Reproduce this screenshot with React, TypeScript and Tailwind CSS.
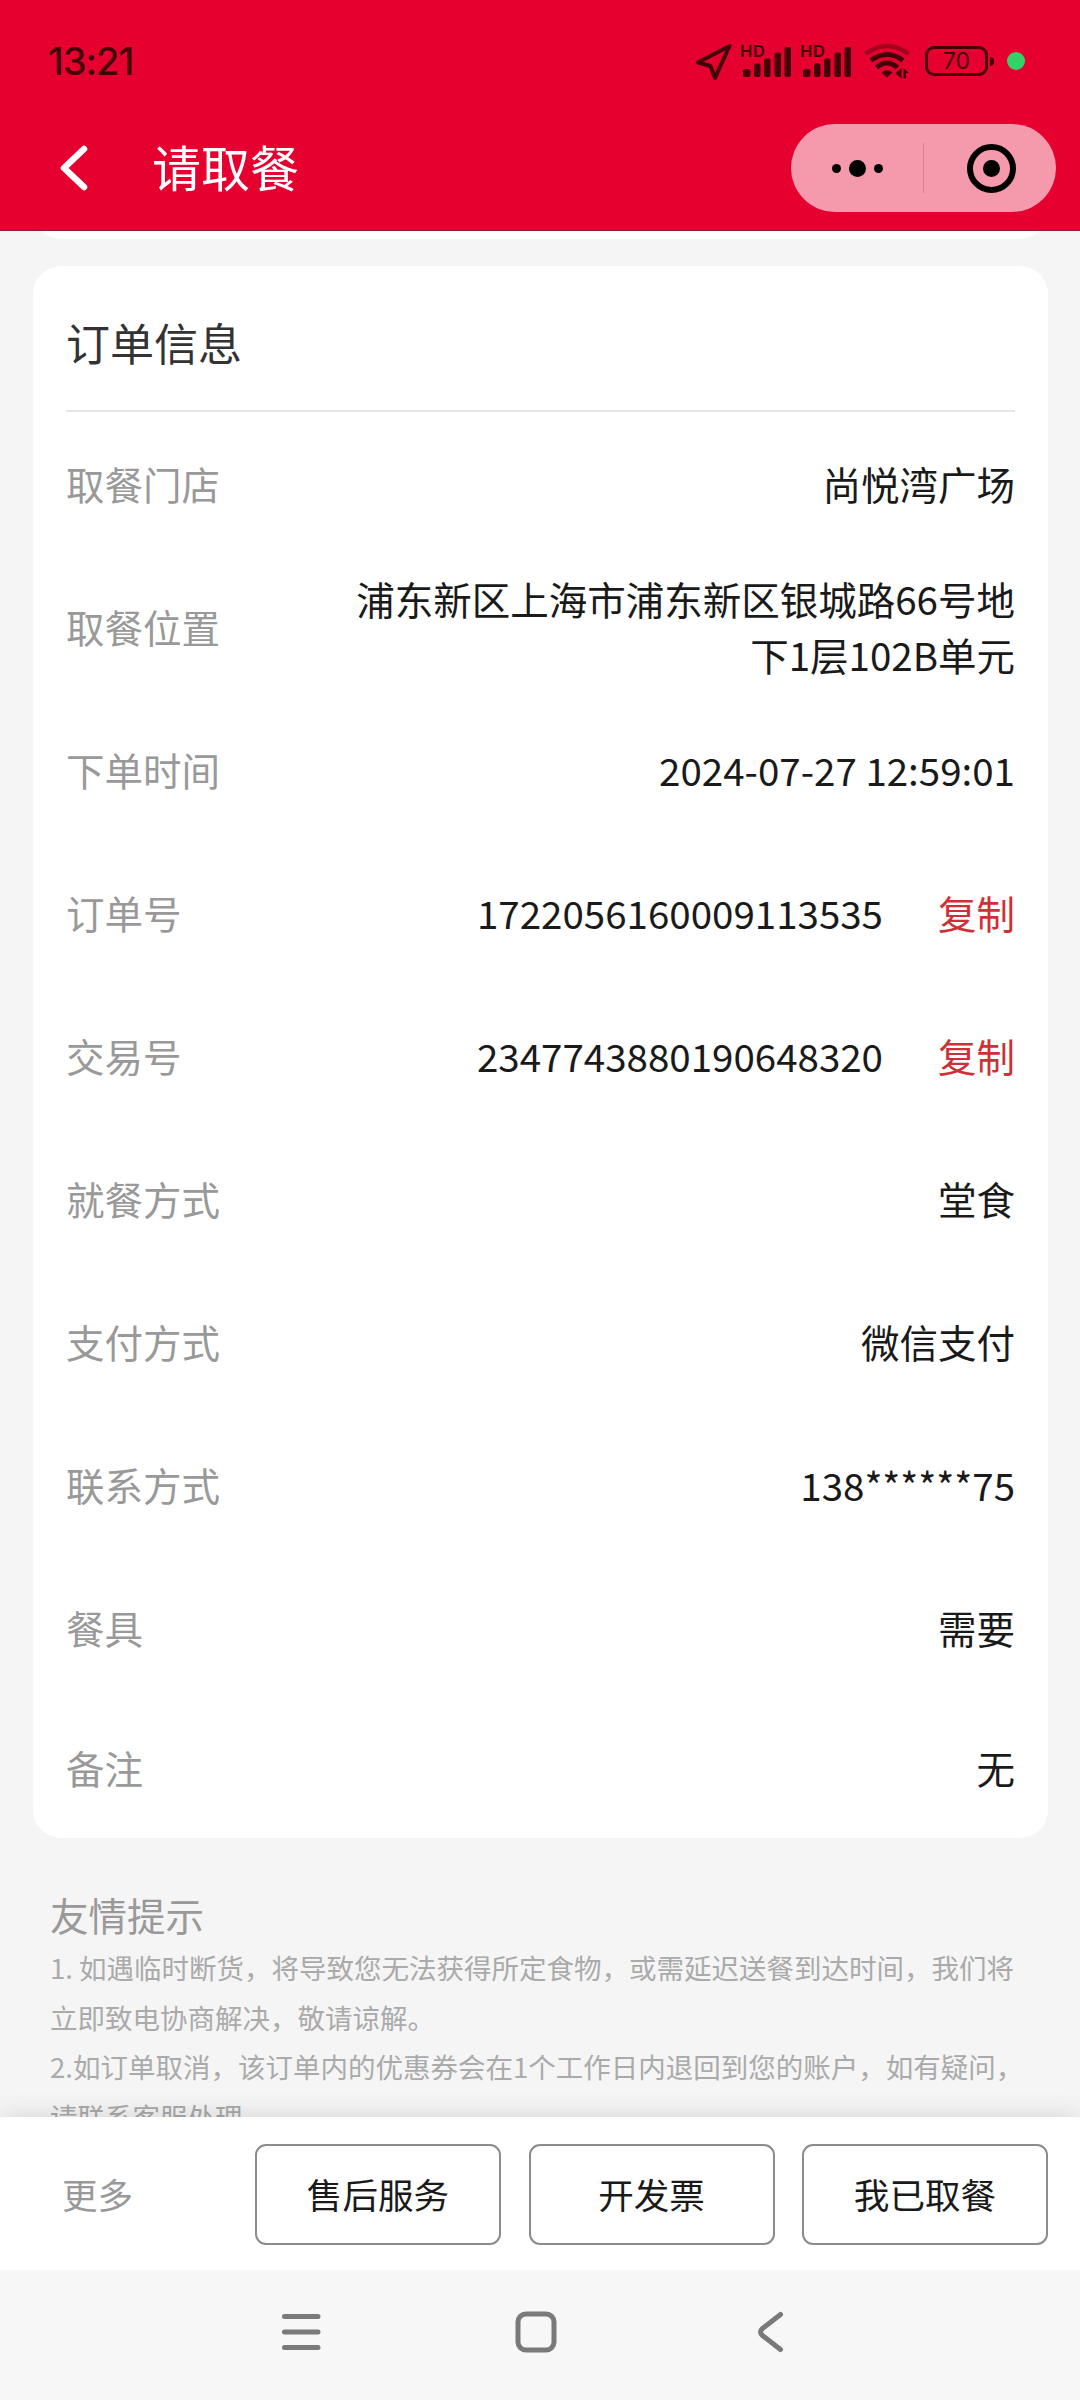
import { clsx } from "clsx";

type OrderField = {
  label: string;
  value: string;
  copyable?: boolean;
};

const orderFields: OrderField[] = [
  { label: "取餐门店", value: "尚悦湾广场" },
  { label: "取餐位置", value: "浦东新区上海市浦东新区银城路66号地下1层102B单元" },
  { label: "下单时间", value: "2024-07-27 12:59:01" },
  { label: "订单号", value: "1722056160009113535", copyable: true },
  { label: "交易号", value: "2347743880190648320", copyable: true },
  { label: "就餐方式", value: "堂食" },
  { label: "支付方式", value: "微信支付" },
  { label: "联系方式", value: "138******75" },
  { label: "餐具", value: "需要" },
  { label: "备注", value: "无" },
];

const tips = [
  "1. 如遇临时断货，将导致您无法获得所定食物，或需延迟送餐到达时间，我们将立即致电协商解决，敬请谅解。",
  "2.如订单取消，该订单内的优惠券会在1个工作日内退回到您的账户，如有疑问，请联系客服处理",
];

const actions = ["售后服务", "开发票", "我已取餐"];

function SignalIcon() {
  return (
    <svg width="52" height="44" viewBox="0 -4 52 44" fill="currentColor">
      <text x="-1" y="14" fontSize="16.5" fontWeight="600" fontFamily="Inter, sans-serif" textLength="25">
        HD
      </text>
      <rect x="2" y="26" width="7.5" height="8" rx="2.5" />
      <rect x="13" y="20.5" width="6.5" height="13.5" rx="2" />
      <rect x="23" y="15.5" width="6.5" height="18.5" rx="2" />
      <rect x="33.5" y="9.5" width="6.5" height="24.5" rx="2" />
      <rect x="43.5" y="4" width="6.5" height="30" rx="2" />
    </svg>
  );
}

function WifiIcon() {
  return (
    <svg width="46" height="36" viewBox="0 0 46 36" fill="none" stroke="currentColor" strokeWidth="5">
      <path d="M1.5 11Q23 -5 44.5 11" opacity="0.4" strokeWidth="4.5" />
      <path d="M7 17.5Q23 5.5 39 17.5" />
      <path d="M12.5 24.5Q23 15.5 33.5 24.5" />
      <path d="M17.5 29.5Q23 25 28.5 29.5L23 34.5Z" fill="currentColor" stroke="none" />
      <path d="M37.5 25V35.5L31.5 30ZM39.5 35.5V25L45 30H42V35.5Z" fill="currentColor" stroke="none" />
    </svg>
  );
}

function StatusBar() {
  return (
    <div className="flex h-[122px] items-center justify-between pr-[55px] pl-[48px] text-[#430009]">
      <span className="font-[Inter,sans-serif] text-[38px] leading-none font-medium tracking-[-1px]">
        13:21
      </span>
      <div className="flex items-center">
        <svg
          width="40"
          height="40"
          viewBox="0 0 40 40"
          fill="none"
          stroke="currentColor"
          strokeWidth="4"
          strokeLinejoin="round"
          className="mr-[7px]"
        >
          <path d="M35.5 5L4 21.500L16.500 25L21 37Z" />
        </svg>
        <div className="mr-[8px]">
          <SignalIcon />
        </div>
        <div className="mr-[11px]">
          <SignalIcon />
        </div>
        <div className="mr-[15px]">
          <WifiIcon />
        </div>
        <div className="flex h-[30px] w-[63px] items-center justify-center rounded-[9px] border-[3px] border-current font-[Inter,sans-serif] text-[23px] leading-none">
          70
        </div>
        <span className="mr-[13px] ml-[2px] h-[9px] w-[4px] rounded-r-sm bg-current" />
        <span className="h-[18px] w-[18px] rounded-full bg-[#35d267]" />
      </div>
    </div>
  );
}

function NavBar() {
  return (
    <div className="flex h-[92px] items-center pr-[24px] pl-[58px] text-white">
      <svg
        width="32"
        height="50"
        viewBox="0 0 32 50"
        fill="none"
        stroke="currentColor"
        strokeWidth="6.5"
        strokeLinecap="round"
        strokeLinejoin="round"
      >
        <path d="M26 6L6 25L26 44" />
      </svg>
      <h1 className="ml-[62px] pb-[6px] text-[49px] leading-none">请取餐</h1>
      <div className="ml-auto flex h-[88px] w-[265px] items-center rounded-full bg-white/60 text-black">
        <div className="flex flex-1 items-center justify-center gap-[8px] pl-[2px]">
          <span className="h-[9px] w-[9px] rounded-full bg-current" />
          <span className="h-[17px] w-[17px] rounded-full bg-current" />
          <span className="h-[9px] w-[9px] rounded-full bg-current" />
        </div>
        <span className="h-[50px] w-px bg-black/15" />
        <div className="flex flex-1 items-center justify-center pl-[3px]">
          <div className="flex h-[49px] w-[49px] items-center justify-center rounded-full border-[6px] border-current">
            <span className="h-[17px] w-[17px] rounded-full bg-current" />
          </div>
        </div>
      </div>
    </div>
  );
}

function OrderRow({ label, value, copyable, last }: OrderField & { last: boolean }) {
  return (
    <div
      className={clsx(
        "flex items-center justify-between leading-[56px]",
        last ? "h-[139px] pb-[3px]" : "h-[143px] pb-[1px]",
      )}
    >
      <dt className="shrink-0 text-[#999999]">{label}</dt>
      <dd className="flex max-w-[664px] items-center text-right text-[#1a1a1a]">
        <span>{value}</span>
        {copyable && <button className="ml-[55px] text-[#cf2f36]">复制</button>}
      </dd>
    </div>
  );
}

function OrderCard() {
  return (
    <section className="mt-[27px] mr-[32px] ml-[33px] h-[1572px] shrink-0 rounded-[28px] bg-white px-[33px]">
      <h2 className="flex h-[146px] items-center border-b-2 border-[#e6e6e6] pt-[8px] text-[44px] text-[#333333]">
        订单信息
      </h2>
      <dl className="text-[38.5px]">
        {orderFields.map((field, index) => (
          <OrderRow key={field.label} {...field} last={index === orderFields.length - 1} />
        ))}
      </dl>
    </section>
  );
}

function ActionBar() {
  return (
    <div className="relative flex h-[153px] items-center justify-between bg-white pt-[2px] pr-[32px] pl-[62px] text-[35.6px] shadow-[0_0_24px_rgba(0,0,0,0.14)]">
      <span className="pb-[2px] text-[#999999]">更多</span>
      <div className="flex gap-[27.5px]">
        {actions.map((action) => (
          <button
            key={action}
            className="h-[101px] w-[246px] rounded-[11px] border-2 border-[#8c8c8c] pb-[1px] text-[#1a1a1a]"
          >
            {action}
          </button>
        ))}
      </div>
    </div>
  );
}

function SystemNav() {
  return (
    <div className="relative flex h-[130px] gap-[185px] bg-[#f7f7f7] pt-[37px] pl-[276px] text-[#7a7a7a]">
      <svg width="50" height="50" viewBox="0 0 50 50" stroke="currentColor" strokeWidth="5" strokeLinecap="round">
        <path d="M8.5 9.5H42M8.5 25H42M8.5 40.5H42" />
      </svg>
      <svg width="50" height="50" viewBox="0 0 50 50" fill="none" stroke="currentColor" strokeWidth="5">
        <rect x="7" y="7" width="36" height="36" rx="8" />
      </svg>
      <svg
        width="50"
        height="50"
        viewBox="0 0 50 50"
        fill="none"
        stroke="currentColor"
        strokeWidth="5"
        strokeLinecap="round"
      >
        <path d="M34.5 7.5L16.5 21.5Q12.5 25 16.5 28.5L34.5 42.5" />
      </svg>
    </div>
  );
}

export default function App() {
  return (
    <div className="flex h-[2400px] w-[1080px] flex-col overflow-hidden bg-[#f5f5f5] font-['Noto_Sans_CJK_SC',sans-serif]">
      <header className="h-[231px] shrink-0 border-b border-[#8f1f3c] bg-[#e60030]">
        <StatusBar />
        <NavBar />
      </header>

      <main className="flex min-h-0 flex-1 flex-col overflow-hidden">
        {/* tail of the previous card */}
        <div className="h-[8px] shrink-0 overflow-hidden pr-[32px] pl-[33px]">
          <div className="-mt-[52px] h-[60px] rounded-[28px] bg-white" />
        </div>
        <OrderCard />
        <section className="pt-[47px] pr-[48px] pl-[50px]">
          <h3 className="text-[38.5px] leading-[58px] text-[#999999]">友情提示</h3>
          <div className="text-[27.5px] leading-[49.5px] text-[#aaaaaa]">
            {tips.map((tip) => (
              <p key={tip}>{tip}</p>
            ))}
          </div>
        </section>
      </main>

      <footer className="shrink-0">
        <ActionBar />
        <SystemNav />
      </footer>
    </div>
  );
}
